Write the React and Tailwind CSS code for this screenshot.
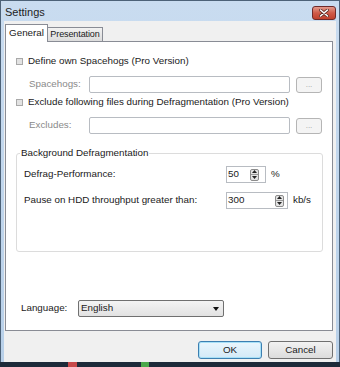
import React from "react";

const font = { fontFamily: '"Liberation Sans", Arial, sans-serif' };

function Check() {
  return <div className="w-[7px] h-[7px] border border-[#a9a9a9] bg-[#e2e2e2] shrink-0" />;
}

function Spin() {
  return (
    <div className="w-[9px] h-[12px] rounded-[2px] border border-[#8c8c8c] bg-[#e4e4e4] flex flex-col items-center justify-center gap-[1px]">
      <svg width="5" height="3" viewBox="0 0 5 3"><path d="M0 3 L2.5 0 L5 3 Z" fill="#222" /></svg>
      <div className="w-[7px] h-px bg-[#9a9a9a]" />
      <svg width="5" height="3" viewBox="0 0 5 3"><path d="M0 0 L2.5 3 L5 0 Z" fill="#222" /></svg>
    </div>
  );
}

export default function App() {
  return (
    <div className="w-[340px] h-[367px] flex flex-col bg-[#bcd3ea] overflow-hidden text-[9.8px] text-[#1a1a1a]" style={font}>
      {/* window frame */}
      <div className="flex-1 flex flex-col border-t border-l border-r border-[#4d6278] bg-gradient-to-b from-[#c9dcf0] to-[#b8d0e9]">
        {/* title bar */}
        <div className="h-[20px] flex items-center pl-[4px] pr-[3px]">
          <span className="text-[11px] text-[#1e1e1e] mt-[2px]">Settings</span>
          <div className="ml-auto mt-[3px] w-[24px] h-[14px] rounded-[3px] border border-[#6e2a2a] bg-gradient-to-b from-[#e29a8c] via-[#cf5a48] to-[#c0402c] flex items-center justify-center">
            <svg width="10" height="8" viewBox="0 0 10 8">
              <path d="M1.5 1 L8.5 7 M8.5 1 L1.5 7" stroke="#5a2a22" strokeWidth="3" strokeLinecap="round" />
              <path d="M1.5 1 L8.5 7 M8.5 1 L1.5 7" stroke="#ffffff" strokeWidth="1.6" strokeLinecap="round" />
            </svg>
          </div>
        </div>
        {/* client area */}
        <div className="ml-[3px] w-[332px] h-[341px] bg-[#f0f0f0] flex flex-col">
          {/* tabs */}
          <div className="h-[20px] flex items-end pl-[1px]">
            <div className="relative z-10 -mb-px w-[43px] h-[18px] bg-white border-t border-l border-r border-[#898c95] flex items-center justify-center pb-[1px]">
              General
            </div>
            <div className="w-[55px] h-[14px] bg-gradient-to-b from-[#f2f2f2] to-[#dcdcdc] border-t border-r border-[#898c95] flex items-center justify-center text-[9px] tracking-[-0.1px] overflow-hidden whitespace-nowrap">
              Presentation
            </div>
          </div>
          {/* panel */}
          <div className="ml-[1px] w-[328px] h-[290px] bg-white border border-[#898c95] flex flex-col">
            <div className="mt-[12px] h-[14px] pl-[10px] flex items-center gap-[5px]">
              <Check />
              <span>Define own Spacehogs (Pro Version)</span>
            </div>
            <div className="mt-[8px] h-[17px] pl-[23px] flex items-center">
              <span className="w-[60px] text-[#8a8a8a]">Spacehogs:</span>
              <div className="w-[201px] h-[17px] border border-[#b8bcc2] rounded-[2px] bg-white" />
              <div className="ml-[6px] w-[26px] h-[16px] border border-[#b5b5b5] rounded-[3px] bg-[#f4f4f4] flex items-center justify-center text-[#a0a0a0] text-[8px]">...</div>
            </div>
            <div className="mt-[2px] h-[14px] pl-[10px] flex items-center gap-[5px]">
              <Check />
              <span>Exclude following files during Defragmentation (Pro Version)</span>
            </div>
            <div className="mt-[8px] h-[17px] pl-[23px] flex items-center">
              <span className="w-[60px] text-[#8a8a8a]">Excludes:</span>
              <div className="w-[201px] h-[17px] border border-[#b8bcc2] rounded-[2px] bg-white" />
              <div className="ml-[6px] w-[26px] h-[16px] border border-[#b5b5b5] rounded-[3px] bg-[#f4f4f4] flex items-center justify-center text-[#a0a0a0] text-[8px]">...</div>
            </div>
            {/* group box */}
            <div className="relative mt-[19px] ml-[10px] w-[307px] h-[99px] border border-[#dcdcdc] rounded-[3px] flex flex-col">
              <span className="absolute -top-[7px] left-[3px] px-[1px] bg-white leading-[12px]">Background Defragmentation</span>
              <div className="mt-[12px] h-[17px] pl-[7px] flex items-center">
                <span className="w-[202px]">Defrag-Performance:</span>
                <div className="w-[40px] h-[17px] border border-[#b8bcc2] bg-white flex items-center justify-between pl-[1px] pr-[6px]">
                  <span>50</span>
                  <Spin />
                </div>
                <span className="ml-[5px]">%</span>
              </div>
              <div className="mt-[9px] h-[17px] pl-[7px] flex items-center">
                <span className="w-[202px]">Pause on HDD throughput greater than:</span>
                <div className="w-[62px] h-[17px] border border-[#b8bcc2] bg-white flex items-center justify-between pl-[1px] pr-[3px]">
                  <span>300</span>
                  <Spin />
                </div>
                <span className="ml-[5px]">kb/s</span>
              </div>
            </div>
            <div className="mt-[48px] h-[17px] pl-[15px] flex items-center">
              <span className="w-[57px]">Language:</span>
              <div className="w-[146px] h-[17px] border border-[#707070] rounded-[2px] bg-gradient-to-b from-[#f4f4f4] to-[#e2e2e2] flex items-center justify-between pl-[2px] pr-[4px]">
                <span>English</span>
                <svg width="6" height="4" viewBox="0 0 6 4"><path d="M0 0 L6 0 L3 4 Z" fill="#111" /></svg>
              </div>
            </div>
          </div>
          {/* buttons */}
          <div className="mt-[10px] flex justify-end gap-[6px] pr-[3px]">
            <div className="w-[64px] h-[18px] rounded-[3px] border border-[#3c7fb1] bg-gradient-to-b from-[#eaf6fd] to-[#d3e9f7] flex items-center justify-center shadow-[inset_0_0_0_1px_#a8e0f7]">OK</div>
            <div className="w-[65px] h-[18px] rounded-[3px] border border-[#707070] bg-gradient-to-b from-[#f2f2f2] to-[#dcdcdc] flex items-center justify-center">Cancel</div>
          </div>
        </div>
      </div>
      {/* taskbar strip */}
      <div className="h-[5px] bg-[#1d2b3a] flex">
        <div className="ml-[68px] w-[9px] h-full bg-[#c7494a]" />
        <div className="ml-[64px] w-[8px] h-full bg-[#4aa84a]" />
      </div>
    </div>
  );
}
